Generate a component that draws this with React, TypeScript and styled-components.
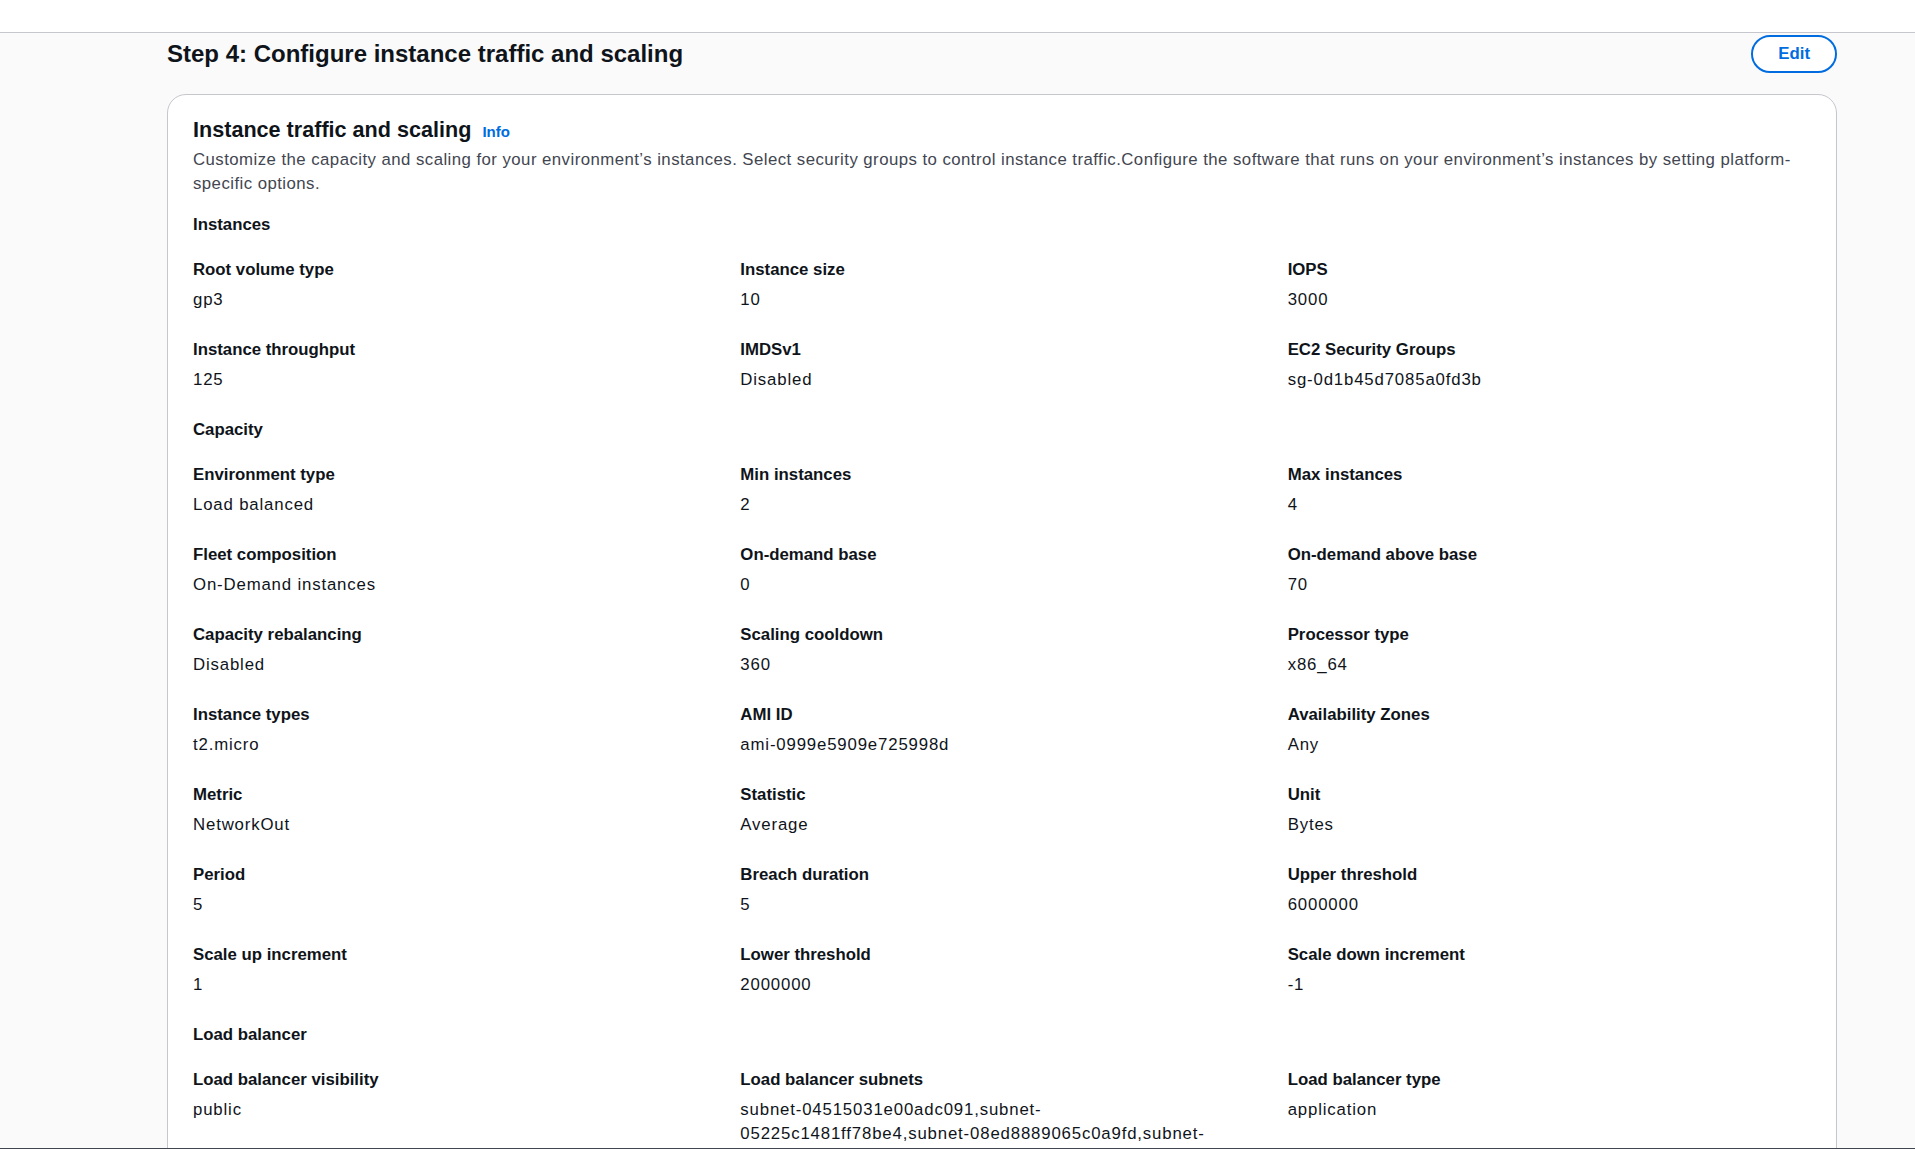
import React from "react";
import styled, { createGlobalStyle } from "styled-components";

type Pair = { label: string; value: string };
type Section = { title: string; items: Pair[] };

const sections: Section[] = [
    {
        title: "Instances",
        items: [
            { label: "Root volume type", value: "gp3" },
            { label: "Instance size", value: "10" },
            { label: "IOPS", value: "3000" },
            { label: "Instance throughput", value: "125" },
            { label: "IMDSv1", value: "Disabled" },
            { label: "EC2 Security Groups", value: "sg-0d1b45d7085a0fd3b" },
        ],
    },
    {
        title: "Capacity",
        items: [
            { label: "Environment type", value: "Load balanced" },
            { label: "Min instances", value: "2" },
            { label: "Max instances", value: "4" },
            { label: "Fleet composition", value: "On-Demand instances" },
            { label: "On-demand base", value: "0" },
            { label: "On-demand above base", value: "70" },
            { label: "Capacity rebalancing", value: "Disabled" },
            { label: "Scaling cooldown", value: "360" },
            { label: "Processor type", value: "x86_64" },
            { label: "Instance types", value: "t2.micro" },
            { label: "AMI ID", value: "ami-0999e5909e725998d" },
            { label: "Availability Zones", value: "Any" },
            { label: "Metric", value: "NetworkOut" },
            { label: "Statistic", value: "Average" },
            { label: "Unit", value: "Bytes" },
            { label: "Period", value: "5" },
            { label: "Breach duration", value: "5" },
            { label: "Upper threshold", value: "6000000" },
            { label: "Scale up increment", value: "1" },
            { label: "Lower threshold", value: "2000000" },
            { label: "Scale down increment", value: "-1" },
        ],
    },
    {
        title: "Load balancer",
        items: [
            { label: "Load balancer visibility", value: "public" },
            {
                label: "Load balancer subnets",
                value: "subnet-04515031e00adc091,subnet-05225c1481ff78be4,subnet-08ed8889065c0a9fd,subnet-0c3f5a2b7d91e4a06",
            },
            { label: "Load balancer type", value: "application" },
        ],
    },
];

const App = () => {
    return (
        <>
            <GlobalStyle />
            <Page>
                <TopBand />
                <Content>
                    <StepHeader>
                        <StepTitle>Step 4: Configure instance traffic and scaling</StepTitle>
                        <EditButton type="button">Edit</EditButton>
                    </StepHeader>

                    <Card.Container>
                        <Card.Header>
                            <Card.Title>Instance traffic and scaling</Card.Title>
                            <Card.InfoLink href="#">Info</Card.InfoLink>
                        </Card.Header>
                        <Card.Description>
                            Customize the capacity and scaling for your environment’s instances. Select security groups
                            to control instance traffic.Configure the software that runs on your environment’s instances
                            by setting platform-specific options.
                        </Card.Description>

                        <Card.Sections>
                            {sections.map((section) => (
                                <KeyValue.Section key={section.title}>
                                    <KeyValue.SectionTitle>{section.title}</KeyValue.SectionTitle>
                                    <KeyValue.Grid>
                                        {section.items.map((item) => (
                                            <KeyValue.Pair key={item.label}>
                                                <KeyValue.Label>{item.label}</KeyValue.Label>
                                                <KeyValue.Value>{item.value}</KeyValue.Value>
                                            </KeyValue.Pair>
                                        ))}
                                    </KeyValue.Grid>
                                </KeyValue.Section>
                            ))}
                        </Card.Sections>
                    </Card.Container>
                </Content>
                <BottomEdge />
            </Page>
        </>
    );
};

export default App;


const GlobalStyle = createGlobalStyle`
    html, body {
        margin: 0;
        padding: 0;
        background: #fafafa;
        font-family: "Liberation Sans", Arial, sans-serif;
        color: #0f141a;
    }

    * {
        box-sizing: border-box;
    }
`;

const Page = styled.div`
    min-height: 100vh;
    background: #fafafa;
`;

const TopBand = styled.div`
    height: 33px;
    background: #ffffff;
    border-bottom: 1px solid #c6c6cd;
`;

const Content = styled.main`
    padding: 0 78px 0 167px;
`;

const StepHeader = styled.header`
    display: flex;
    align-items: center;
    justify-content: space-between;

    padding-top: 2px;
`;

const StepTitle = styled.h2`
    margin: 0;

    font-size: 24px;
    line-height: 30px;
    font-weight: 700;
    color: #0f141a;
`;

const EditButton = styled.button`
    height: 38px;
    padding: 0 25px;

    background: #ffffff;
    border: 2px solid #006ce0;
    border-radius: 20px;

    font-family: inherit;
    font-size: 16.8px;
    font-weight: 700;
    color: #006ce0;

    cursor: pointer;
`;

const Card = {
    Container: styled.section`
        margin-top: 21px;
        padding: 21px 25px 40px;

        background: #ffffff;
        border: 1px solid #c6c6cd;
        border-radius: 19px;
    `,

    Header: styled.div`
        display: flex;
        align-items: baseline;
    `,

    Title: styled.h3`
        margin: 0;

        font-size: 21.6px;
        line-height: 28px;
        font-weight: 700;
        color: #0f141a;
    `,

    InfoLink: styled.a`
        margin-left: 11px;

        font-size: 15px;
        font-weight: 700;
        color: #006ce0;
        text-decoration: none;
    `,

    Description: styled.p`
        margin: 4px 0 0;

        font-size: 16.8px;
        line-height: 24px;
        letter-spacing: 0.45px;
        color: #424650;
    `,

    Sections: styled.div`
        display: flex;
        flex-direction: column;
        gap: 26px;

        margin-top: 17px;
    `,
};

const KeyValue = {
    Section: styled.div`
        display: flex;
        flex-direction: column;
        gap: 21px;
    `,

    SectionTitle: styled.h4`
        margin: 0;

        font-size: 16.8px;
        line-height: 24px;
        font-weight: 700;
        color: #0f141a;
    `,

    Grid: styled.div`
        display: grid;
        grid-template-columns: repeat(3, 1fr);
        column-gap: 24px;
        row-gap: 26px;
    `,

    Pair: styled.div`
        display: flex;
        flex-direction: column;
        gap: 6px;

        min-width: 0;
    `,

    Label: styled.span`
        font-size: 16.8px;
        line-height: 24px;
        font-weight: 700;
        color: #0f141a;
    `,

    Value: styled.span`
        font-size: 16.8px;
        line-height: 24px;
        letter-spacing: 0.05em;
        color: #0f141a;
    `,
};

const BottomEdge = styled.div`
    position: fixed;
    left: 0;
    right: 0;
    bottom: 0;

    height: 1px;
    background: #414750;
`;
